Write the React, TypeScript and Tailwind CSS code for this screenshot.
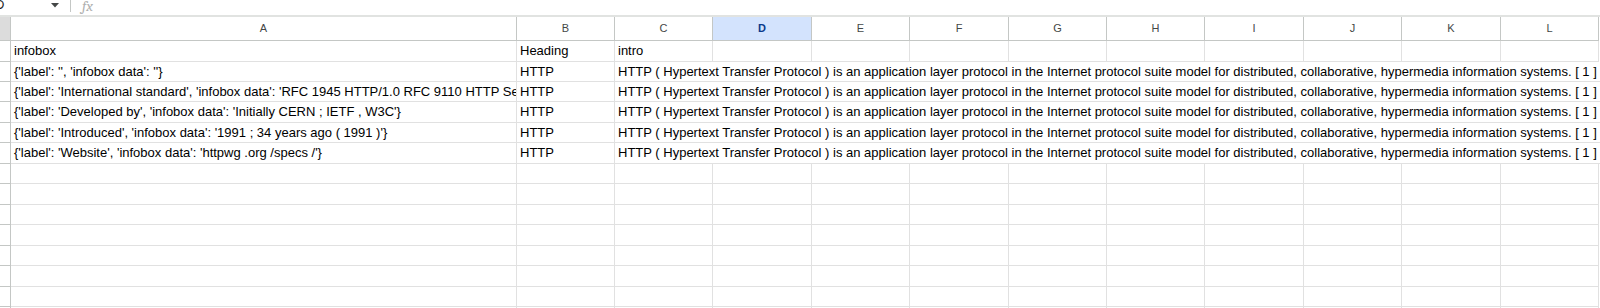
import React from "react";

const INTRO =
  "HTTP ( Hypertext Transfer Protocol ) is an application layer protocol in the Internet protocol suite model for distributed, collaborative, hypermedia information systems. [ 1 ]";

const cols = [
  { key: "A", w: "w-[506px]" },
  { key: "B", w: "w-[98px]" },
  { key: "C", w: "w-[98px]" },
  { key: "D", w: "w-[99px]" },
  { key: "E", w: "w-[98px]" },
  { key: "F", w: "w-[99px]" },
  { key: "G", w: "w-[98px]" },
  { key: "H", w: "w-[98px]" },
  { key: "I", w: "w-[99px]" },
  { key: "J", w: "w-[98px]" },
  { key: "K", w: "w-[99px]" },
  { key: "L", w: "w-[98px]" },
];

const infobox = [
  "{'label': '', 'infobox data': ''}",
  "{'label': 'International standard', 'infobox data': 'RFC 1945 HTTP/1.0 RFC 9110 HTTP Semantics RFC 9111 HTTP Caching'}",
  "{'label': 'Developed by', 'infobox data': 'Initially CERN ; IETF , W3C'}",
  "{'label': 'Introduced', 'infobox data': '1991 ; 34 years ago ( 1991 )'}",
  "{'label': 'Website', 'infobox data': 'httpwg .org /specs /'}",
];

// alternating heights so grid lines land where the screenshot has them
const rowH = ["h-[21px]", "h-[20px]", "h-[20px]", "h-[21px]", "h-[20px]", "h-[21px]", "h-[20px]", "h-[21px]", "h-[20px]", "h-[21px]", "h-[20px]", "h-[21px]", "h-[20px]", "h-[21px]"];

function RowHead() {
  return <div className="w-[11px] shrink-0 border-r border-b border-[#c4c7c5] bg-white" />;
}

function Cell({ w, children }: { w: string; children?: React.ReactNode }) {
  return (
    <div className={`${w} shrink-0 overflow-hidden whitespace-nowrap border-r border-b border-[#e1e1e1] pl-[3px] pt-[2px] leading-[16px]`}>
      {children}
    </div>
  );
}

export default function App() {
  return (
    <div className="w-[1600px] h-[308px] overflow-hidden bg-white text-[13px] text-[#000] [font-family:'Liberation_Sans',Arial,sans-serif]">
      {/* formula bar */}
      <div className="relative flex h-[17px] items-start border-b-2 border-[#e1e3e1]">
        <span className="-ml-[5px] text-[13px] leading-[10px] text-[#1f1f1f]">D</span>
        <svg className="absolute left-[51px] top-[3px]" width="8" height="5" viewBox="0 0 8 5">
          <path d="M0 0h8L4 4.5z" fill="#444746" />
        </svg>
        <div className="absolute left-[70px] top-0 h-[12px] w-px bg-[#c4c7c5]" />
        <span className="absolute left-[82px] -top-[5px] font-serif italic text-[15px] text-[#b0b0b0]">fx</span>
      </div>

      {/* column headers */}
      <div className="flex h-[24px]">
        <div className="w-[11px] shrink-0 border-r border-b border-[#c4c7c5] bg-[#dcdcdc]" />
        {cols.map((c) => (
          <div
            key={c.key}
            className={`${c.w} shrink-0 flex items-center justify-center border-r border-b border-[#c4c7c5] text-[11px] ${
              c.key === "D" ? "bg-[#d3e3fd] font-bold text-[#0b3a8a]" : "bg-white text-[#444746]"
            }`}
          >
            {c.key}
          </div>
        ))}
      </div>

      {/* row 1: headings */}
      <div className={`flex ${rowH[0]}`}>
        <RowHead />
        <Cell w={cols[0].w}>infobox</Cell>
        <Cell w={cols[1].w}>Heading</Cell>
        <Cell w={cols[2].w}>intro</Cell>
        {cols.slice(3).map((c) => (
          <Cell key={c.key} w={c.w} />
        ))}
      </div>

      {/* data rows, intro overflows across the empty columns */}
      {infobox.map((text, i) => (
        <div key={i} className={`flex ${rowH[i + 1]}`}>
          <RowHead />
          <Cell w={cols[0].w}>{text}</Cell>
          <Cell w={cols[1].w}>HTTP</Cell>
          <Cell w="w-[986px]">{INTRO}</Cell>
        </div>
      ))}

      {/* empty rows */}
      {rowH.slice(6).map((h, i) => (
        <div key={i} className={`flex ${h}`}>
          <RowHead />
          {cols.map((c) => (
            <Cell key={c.key} w={c.w} />
          ))}
        </div>
      ))}
    </div>
  );
}
